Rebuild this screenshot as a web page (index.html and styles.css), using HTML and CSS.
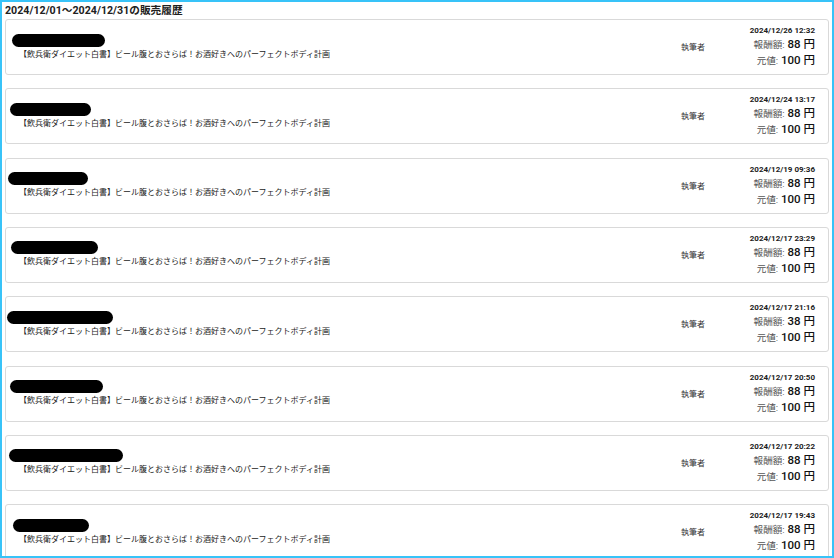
FILE: index.html
```html
<!DOCTYPE html>
<html lang="ja">
<head>
<meta charset="utf-8">
<title>販売履歴</title>
<link rel="stylesheet" href="styles.css">
</head>
<body>
<main class="frame">
  <h1 class="title">2024/12/01〜2024/12/31の販売履歴</h1>
  <ul class="list">
    <li class="card">
      <div class="info"><div class="redact r1"></div><p class="book">【飲兵衛ダイエット白書】ビール腹とおさらば！お酒好きへのパーフェクトボディ計画</p></div>
      <div class="role">執筆者</div>
      <div class="sale"><div class="date">2024/12/26 12:32</div><div class="money"><span class="label">報酬額:</span> <b>88 円</b></div><div class="money"><span class="label">元値:</span> <b>100 円</b></div></div>
    </li>
    <li class="card">
      <div class="info"><div class="redact r2"></div><p class="book">【飲兵衛ダイエット白書】ビール腹とおさらば！お酒好きへのパーフェクトボディ計画</p></div>
      <div class="role">執筆者</div>
      <div class="sale"><div class="date">2024/12/24 13:17</div><div class="money"><span class="label">報酬額:</span> <b>88 円</b></div><div class="money"><span class="label">元値:</span> <b>100 円</b></div></div>
    </li>
    <li class="card">
      <div class="info"><div class="redact r3"></div><p class="book">【飲兵衛ダイエット白書】ビール腹とおさらば！お酒好きへのパーフェクトボディ計画</p></div>
      <div class="role">執筆者</div>
      <div class="sale"><div class="date">2024/12/19 09:36</div><div class="money"><span class="label">報酬額:</span> <b>88 円</b></div><div class="money"><span class="label">元値:</span> <b>100 円</b></div></div>
    </li>
    <li class="card">
      <div class="info"><div class="redact r4"></div><p class="book">【飲兵衛ダイエット白書】ビール腹とおさらば！お酒好きへのパーフェクトボディ計画</p></div>
      <div class="role">執筆者</div>
      <div class="sale"><div class="date">2024/12/17 23:29</div><div class="money"><span class="label">報酬額:</span> <b>88 円</b></div><div class="money"><span class="label">元値:</span> <b>100 円</b></div></div>
    </li>
    <li class="card">
      <div class="info"><div class="redact r5"></div><p class="book">【飲兵衛ダイエット白書】ビール腹とおさらば！お酒好きへのパーフェクトボディ計画</p></div>
      <div class="role">執筆者</div>
      <div class="sale"><div class="date">2024/12/17 21:16</div><div class="money"><span class="label">報酬額:</span> <b>38 円</b></div><div class="money"><span class="label">元値:</span> <b>100 円</b></div></div>
    </li>
    <li class="card">
      <div class="info"><div class="redact r6"></div><p class="book">【飲兵衛ダイエット白書】ビール腹とおさらば！お酒好きへのパーフェクトボディ計画</p></div>
      <div class="role">執筆者</div>
      <div class="sale"><div class="date">2024/12/17 20:50</div><div class="money"><span class="label">報酬額:</span> <b>88 円</b></div><div class="money"><span class="label">元値:</span> <b>100 円</b></div></div>
    </li>
    <li class="card">
      <div class="info"><div class="redact r7"></div><p class="book">【飲兵衛ダイエット白書】ビール腹とおさらば！お酒好きへのパーフェクトボディ計画</p></div>
      <div class="role">執筆者</div>
      <div class="sale"><div class="date">2024/12/17 20:22</div><div class="money"><span class="label">報酬額:</span> <b>88 円</b></div><div class="money"><span class="label">元値:</span> <b>100 円</b></div></div>
    </li>
    <li class="card">
      <div class="info"><div class="redact r8"></div><p class="book">【飲兵衛ダイエット白書】ビール腹とおさらば！お酒好きへのパーフェクトボディ計画</p></div>
      <div class="role">執筆者</div>
      <div class="sale"><div class="date">2024/12/17 19:43</div><div class="money"><span class="label">報酬額:</span> <b>88 円</b></div><div class="money"><span class="label">元値:</span> <b>100 円</b></div></div>
    </li>
  </ul>
</main>
</body>
</html>
```
FILE: styles.css
```css
* { box-sizing: border-box; }
html, body { margin: 0; height: 100%; overflow: hidden; background: #fff; }
body { font-family: Roboto, "Noto Sans CJK JP", sans-serif; color: #212121; }
.frame {
  height: 558px;
  border: 2px solid #38c3f8;
  padding: 2px 3px 0 3px;
  overflow: hidden;
}
.title {
  margin: 0 0 1px;
  font-size: 10.67px;
  font-weight: 700;
  line-height: 14px;
}
.list {
  list-style: none;
  margin: 0;
  padding: 0;
  display: flex;
  flex-direction: column;
  gap: 13.33px;
}
.card {
  height: 56px;
  flex: none;
  border: 1px solid #d9d9d9;
  border-radius: 3px;
  display: flex;
  align-items: center;
  padding-right: 13px;
  background: #fff;
}
.info { flex: 1; min-width: 0; }
.redact { height: 13px; border-radius: 7px; background: #000; }
.r1 { width: 93px; margin-left: 6px; }
.r2 { width: 81px; margin-left: 4px; }
.r3 { width: 80px; margin-left: 2px; }
.r4 { width: 87px; margin-left: 5px; }
.r5 { width: 106px; margin-left: 1px; }
.r6 { width: 93px; margin-left: 4px; }
.r7 { width: 114px; margin-left: 3px; }
.r8 { width: 76px; margin-left: 7px; }
.book {
  margin: 2px 0 0 13px;
  font-size: 8px;
  line-height: 12px;
  color: #222;
  white-space: nowrap;
}
.role { width: 44px; flex: none; font-size: 8px; color: #333; margin-top: -1px; }
.sale { width: 90px; flex: none; text-align: right; }
.date { font-size: 8px; font-weight: 700; line-height: 10px; }
.money { font-size: 11.5px; line-height: 16px; }
.money b { font-weight: 500; color: #111; line-height: 1; }
.label { font-size: 9.6px; color: #555; line-height: 1; }
```
